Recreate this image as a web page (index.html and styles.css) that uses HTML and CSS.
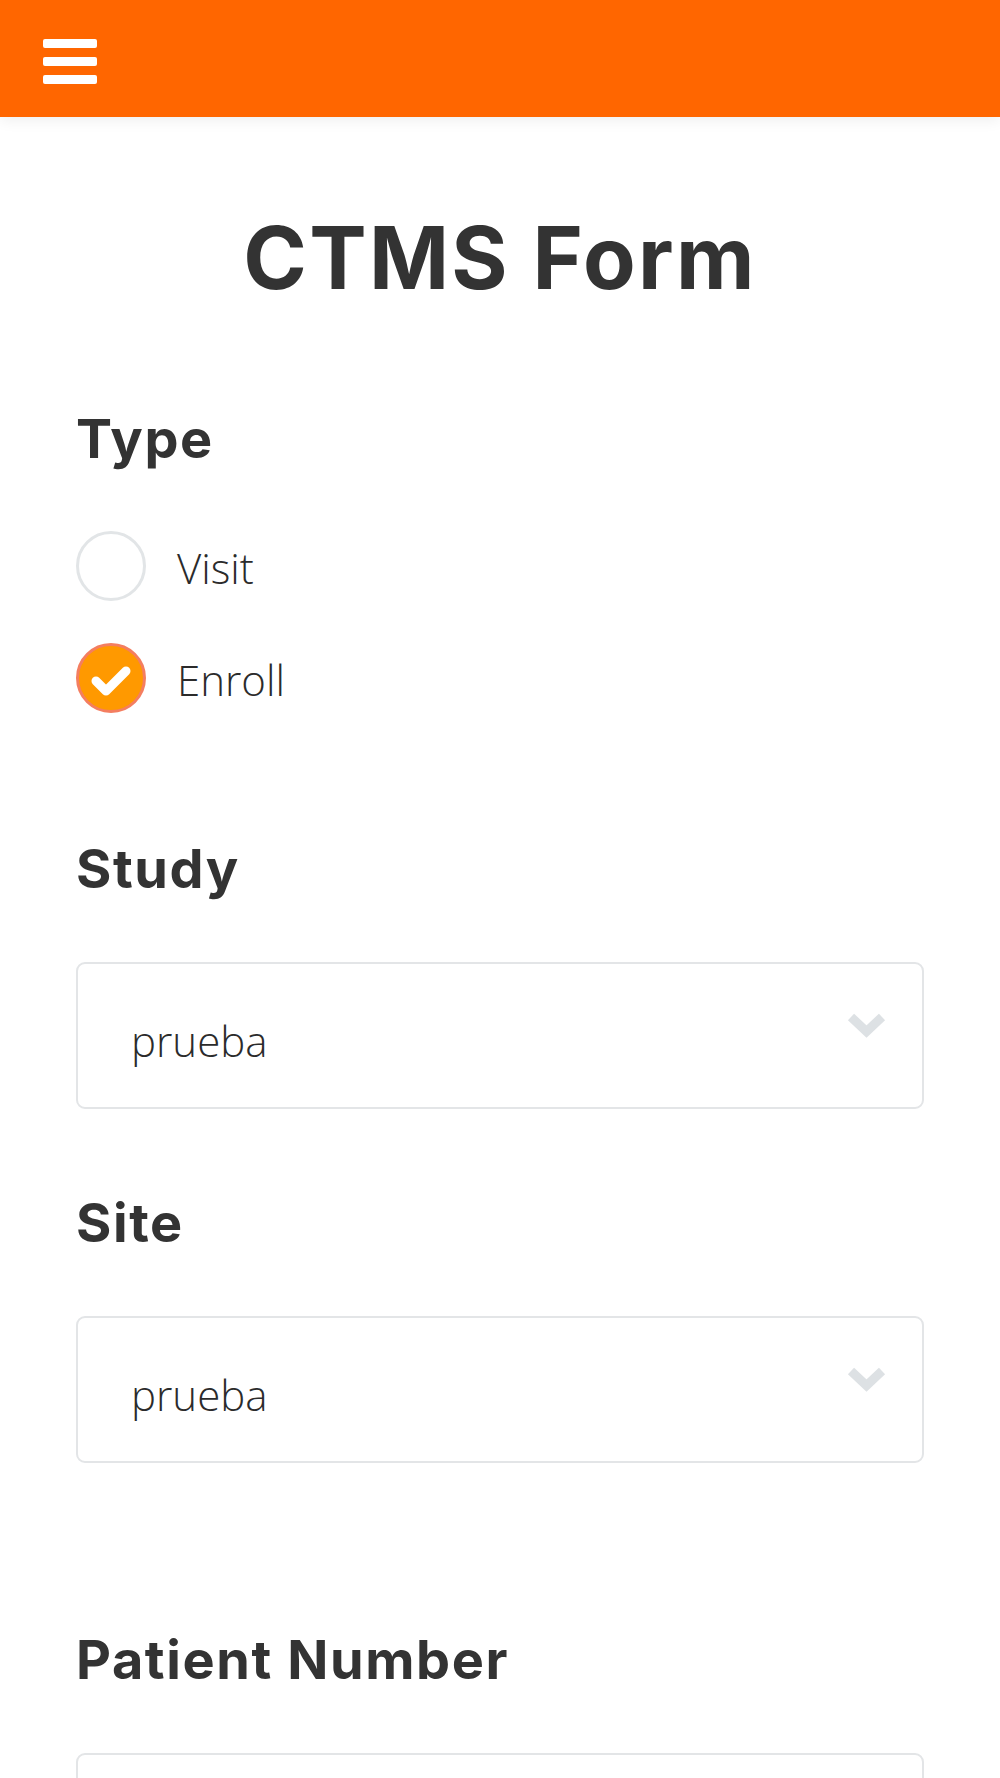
FILE: index.html
```html
<!DOCTYPE html>
<html lang="en">
<head>
<meta charset="utf-8">
<title>CTMS Form</title>
<link rel="stylesheet" href="styles.css">
</head>
<body>
<header class="topbar">
  <button class="menu-btn" aria-label="Menu">
    <span class="bar"></span>
    <span class="bar"></span>
    <span class="bar"></span>
  </button>
</header>
<main class="page">
  <h1 class="title">CTMS Form</h1>

  <section class="field type-field">
    <h2 class="label">Type</h2>
    <div class="radios">
      <div class="radio-row">
        <span class="radio"></span>
        <span class="radio-text">Visit</span>
      </div>
      <div class="radio-row">
        <span class="radio checked">
          <svg viewBox="0 0 70 70" width="70" height="70"><polyline points="20,38 30,48 50,28" fill="none" stroke="#fff" stroke-width="9" stroke-linecap="round" stroke-linejoin="round"/></svg>
        </span>
        <span class="radio-text">Enroll</span>
      </div>
    </div>
  </section>

  <section class="field study-field">
    <h2 class="label">Study</h2>
    <div class="select">
      <span class="select-value">prueba</span>
      <svg class="chevron" viewBox="0 0 41 27" width="41" height="27"><polyline points="5,6 20.5,20.5 36,6" fill="none" stroke="#dde1e4" stroke-width="9" stroke-linejoin="miter"/></svg>
    </div>
  </section>

  <section class="field site-field">
    <h2 class="label">Site</h2>
    <div class="select">
      <span class="select-value">prueba</span>
      <svg class="chevron" viewBox="0 0 41 27" width="41" height="27"><polyline points="5,6 20.5,20.5 36,6" fill="none" stroke="#dde1e4" stroke-width="9" stroke-linejoin="miter"/></svg>
    </div>
  </section>

  <section class="field patient-field">
    <h2 class="label">Patient Number</h2>
    <div class="input"></div>
  </section>
</main>
</body>
</html>
```

FILE: styles.css
```css
* { box-sizing: border-box; }

html, body {
  margin: 0;
  padding: 0;
  background: #ffffff;
}

body {
  font-family: "Open Sans", "Noto Sans", sans-serif;
  color: #333333;
  overflow: hidden;
}

.topbar {
  height: 117px;
  background: #ff6600;
  box-shadow: 0 3px 14px rgba(0, 0, 0, 0.07);
  padding: 39px 0 0 43px;
  position: relative;
  z-index: 2;
}

.menu-btn {
  display: flex;
  flex-direction: column;
  gap: 9px;
  padding: 0;
  margin: 0;
  border: 0;
  background: transparent;
  width: 54px;
}

.bar {
  display: block;
  width: 54px;
  height: 9px;
  background: #ffffff;
  border-radius: 2px;
}

.page {
  padding: 0 76px;
}

.title {
  margin: 99px 0 0 0;
  text-align: center;
  font-family: "Inter", "Liberation Sans", sans-serif;
  font-weight: 700;
  font-size: 86px;
  line-height: 85px;
  letter-spacing: 2.3px;
  color: #333333;
}

.field { margin: 0; }

.label {
  margin: 0;
  font-family: "Inter", "Liberation Sans", sans-serif;
  font-weight: 700;
  font-size: 54px;
  line-height: 54px;
  letter-spacing: 1.6px;
  color: #333333;
}

.type-field { margin-top: 111px; }

.radios {
  margin-top: 65px;
  display: flex;
  flex-direction: column;
  gap: 42px;
}

.radio-row {
  display: flex;
  align-items: center;
  height: 70px;
  gap: 31px;
}

.radio {
  flex: none;
  width: 70px;
  height: 70px;
  border-radius: 50%;
  border: 3px solid #e2e5e7;
  background: #ffffff;
  position: relative;
}

.radio.checked {
  background: #ff9900;
  border-color: #f47e60;
}

.radio.checked svg {
  position: absolute;
  left: -3px;
  top: -3px;
}

.radio-text {
  font-family: "Open Sans", "Noto Sans", sans-serif;
  font-weight: 300;
  font-size: 42px;
  line-height: 70px;
  padding-top: 3px;
  color: #2b2b2b;
}

.study-field { margin-top: 129px; }
.site-field { margin-top: 87px; }
.patient-field { margin-top: 170px; }

.select, .input {
  margin-top: 66px;
  height: 147px;
  border: 2px solid #e3e5e7;
  border-radius: 9px;
  background: #ffffff;
  position: relative;
}

.select {
  display: flex;
  align-items: flex-start;
  justify-content: space-between;
  padding: 0 35px 0 53px;
}

.select-value {
  font-family: "Open Sans", "Noto Sans", sans-serif;
  font-weight: 300;
  font-size: 42px;
  line-height: 60px;
  margin-top: 47px;
  color: #2b2b2b;
}

.chevron {
  margin-top: 47px;
  flex: none;
}
```
